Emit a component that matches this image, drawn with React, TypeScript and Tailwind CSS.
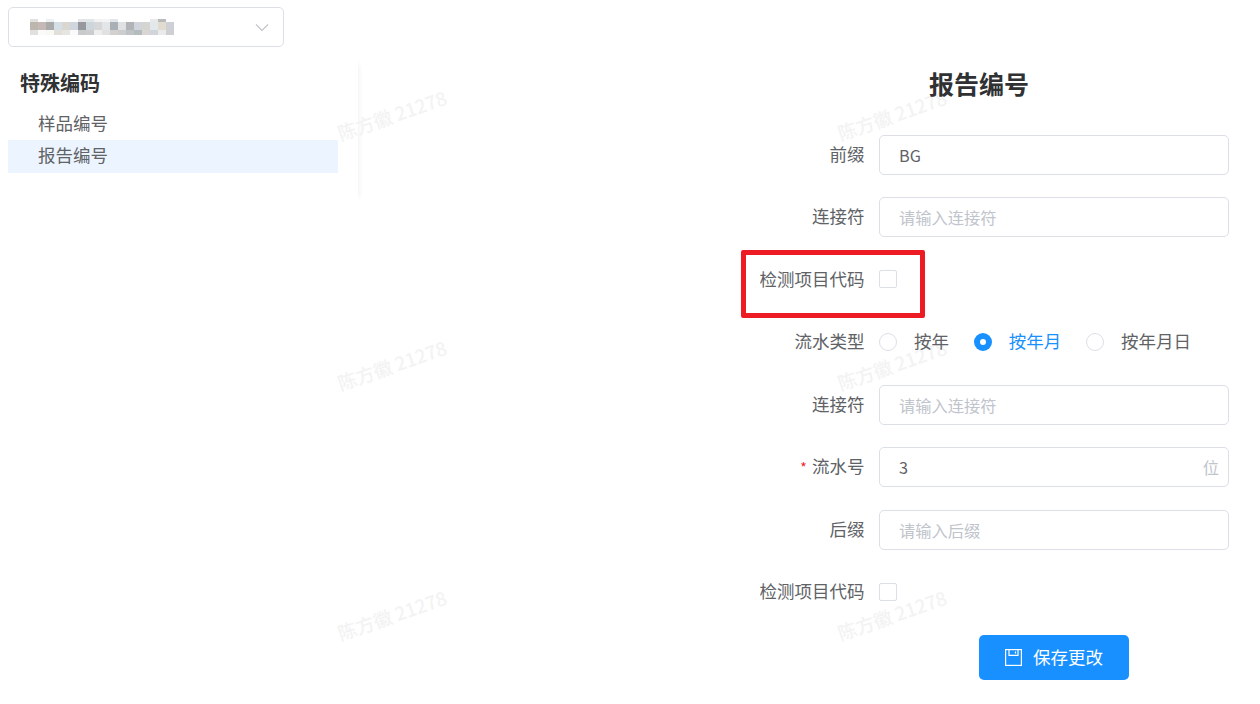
const marcas = [
  "left-[335px] top-[101px]",
  "left-[835px] top-[101px]",
  "left-[335px] top-[351px]",
  "left-[835px] top-[351px]",
  "left-[335px] top-[601px]",
  "left-[835px] top-[601px]",
]

// mosaico do nome borrado no seletor: [altura, cores]
const mosaico: [number, string[]][] = [
  [3, ["#e2e0dc", "#ffffff", "#eef1f3", "#ffffff", "#ffffff", "#ffffff", "#e4e5e8", "#e3e6e8", "#f3f3f3", "#f5f4f4", "#e2e6ea", "#ffffff", "#ffffff", "#ffffff", "#ffffff", "#e9e9e9", "#b8babb", "#ffffff"]],
  [8, ["#bdb6af", "#c4b9b4", "#a9aaa9", "#d5dfe6", "#dad7d0", "#d0d6de", "#96989d", "#cdd6dc", "#d5d7d9", "#e3e5e7", "#a9b0b5", "#dfe1e3", "#b1b3b7", "#cfd5db", "#d5d5d1", "#e2e8ec", "#e2dbd0", "#cdd0d4"]],
  [5, ["#e0e0de", "#fafafa", "#f8f8f4", "#e2dfd9", "#e6e5e2", "#fafafa", "#c9cacd", "#cbccce", "#ededee", "#e0e1e2", "#d3d0d0", "#cbcdcf", "#bec3c5", "#b5bcbe", "#d9d6d3", "#d1d5da", "#eaeaea", "#cdcfd2"]],
]

function Campo({ label, obrigatorio, children }: { label: string; obrigatorio?: boolean; children: React.ReactNode }) {
  return (
    <div className="flex h-10 items-center">
      <label className="w-[135.4px] shrink-0 pb-[2px] text-right text-[17.5px] text-[#606266]">
        {obrigatorio && <span className="mr-[5px] text-[14px] text-[#f5222d]">*</span>}
        {label}
      </label>
      <div className="ml-[14.6px] flex-1">{children}</div>
    </div>
  )
}

function Entrada({ value, placeholder, sufixo }: { value?: string; placeholder?: string; sufixo?: string }) {
  return (
    <div className="flex h-10 items-center rounded-[5px] border border-[#dcdfe6] pr-[9px] pl-[19px]">
      <input
        readOnly
        value={value ?? ""}
        placeholder={placeholder}
        className="w-full min-w-0 flex-1 bg-transparent text-[16.25px] text-[#606266] outline-none placeholder:text-[#c0c4cc]"
      />
      {sufixo && <span className="text-[16.25px] text-[#c0c4cc]">{sufixo}</span>}
    </div>
  )
}

function Radio({ label, ativo }: { label: string; ativo?: boolean }) {
  return (
    <div className={ativo ? "flex items-center gap-[17px] text-[#1890ff]" : "flex items-center gap-[17px] text-[#606266]"}>
      {ativo ? (
        <span className="flex h-[18px] w-[18px] items-center justify-center rounded-full bg-[#1890ff]">
          <span className="h-[6px] w-[6px] rounded-full bg-white" />
        </span>
      ) : (
        <span className="h-[18px] w-[18px] rounded-full border border-[#dcdfe6]" />
      )}
      <span className="pb-[2px] text-[17.5px]">{label}</span>
    </div>
  )
}

function Caixa() {
  return <span className="mb-px block h-[18px] w-[18px] rounded-[2px] border border-[#dcdfe6]" />
}

export default function App() {
  return (
    <div className="relative flex h-[704px] w-[1260px] overflow-hidden bg-white font-['Noto_Sans_CJK_SC',sans-serif]">
      <aside className="relative w-[360px] shrink-0 pt-[7px] pl-2">
        <div className="flex h-10 w-[276px] items-center justify-between rounded-[5px] border border-[#dcdfe6] pr-[14px] pl-[21px]">
          <svg width="144" height="16" viewBox="0 0 144 16">
            {mosaico.map(([altura, linha], y) =>
              linha.map((cor, x) => (
                <rect
                  key={`${x}-${y}`}
                  x={x * 8}
                  y={y === 0 ? 0 : y === 1 ? 3 : 11}
                  width="8"
                  height={altura}
                  fill={cor}
                />
              ))
            )}
          </svg>
          <svg width="14" height="9" viewBox="0 0 14 9" fill="none" stroke="#c0c4cc" strokeWidth="1.1">
            <path d="M1 1.5 7 7.5 13 1.5" />
          </svg>
        </div>

        <div className="mt-[13px] h-[142px] w-[350px] bg-white shadow-[5px_0_5px_-4px_rgba(0,0,0,0.06)]">
          <div className="w-[330px] pt-2">
            <h2 className="pl-3 text-[20px] leading-[30px] font-bold text-[#303133]">特殊编码</h2>
            <div className="mt-[9.5px] flex h-[32.5px] items-center pb-[2px] pl-[30px] text-[17.5px] text-[#606266]">样品编号</div>
            <div className="flex h-[32.5px] items-center bg-[#ecf5ff] pb-[3px] pl-[30px] text-[17.5px] text-[#606266]">报告编号</div>
          </div>
        </div>
      </aside>

      {marcas.map((posicao) => (
        <span
          key={posicao}
          className={`absolute ${posicao} -rotate-[19deg] text-[18.75px] font-medium whitespace-nowrap text-[#f3f3f3]`}
        >
          陈方徽 21278
        </span>
      ))}

      <main className="relative mr-[31px] ml-auto w-[500px] pt-[65px]">
        <h1 className="h-[69.8px] text-center text-[25px] leading-9 font-bold text-[#303133]">报告编号</h1>
        <form className="flex flex-col gap-[22.5px]">
          <Campo label="前缀">
            <Entrada value="BG" />
          </Campo>
          <Campo label="连接符">
            <Entrada placeholder="请输入连接符" />
          </Campo>
          <Campo label="检测项目代码">
            <Caixa />
          </Campo>
          <Campo label="流水类型">
            <div className="flex gap-[24.8px]">
              <Radio label="按年" />
              <Radio label="按年月" ativo />
              <Radio label="按年月日" />
            </div>
          </Campo>
          <Campo label="连接符">
            <Entrada placeholder="请输入连接符" />
          </Campo>
          <Campo label="流水号" obrigatorio>
            <Entrada value="3" sufixo="位" />
          </Campo>
          <Campo label="后缀">
            <Entrada placeholder="请输入后缀" />
          </Campo>
          <Campo label="检测项目代码">
            <Caixa />
          </Campo>
          <div className="pl-[250px]">
            <button
              type="button"
              className="flex h-[45px] w-[150px] items-center justify-center gap-[11px] rounded-[5px] bg-[#1890ff] text-[17.5px] text-white"
            >
              <svg width="17" height="17" viewBox="0 0 17 17" fill="none" stroke="white" strokeWidth="1.2">
                <rect x="0.6" y="0.6" width="15.8" height="15.8" />
                <path d="M4 0.6V6.4H13V0.6M10.5 2.5V4.5" />
              </svg>
              保存更改
            </button>
          </div>
        </form>
      </main>

      <div className="absolute top-[250px] left-[741px] h-[68px] w-[184px] rounded-[2px] border-[5px] border-[#ed1c24]" />
    </div>
  )
}
